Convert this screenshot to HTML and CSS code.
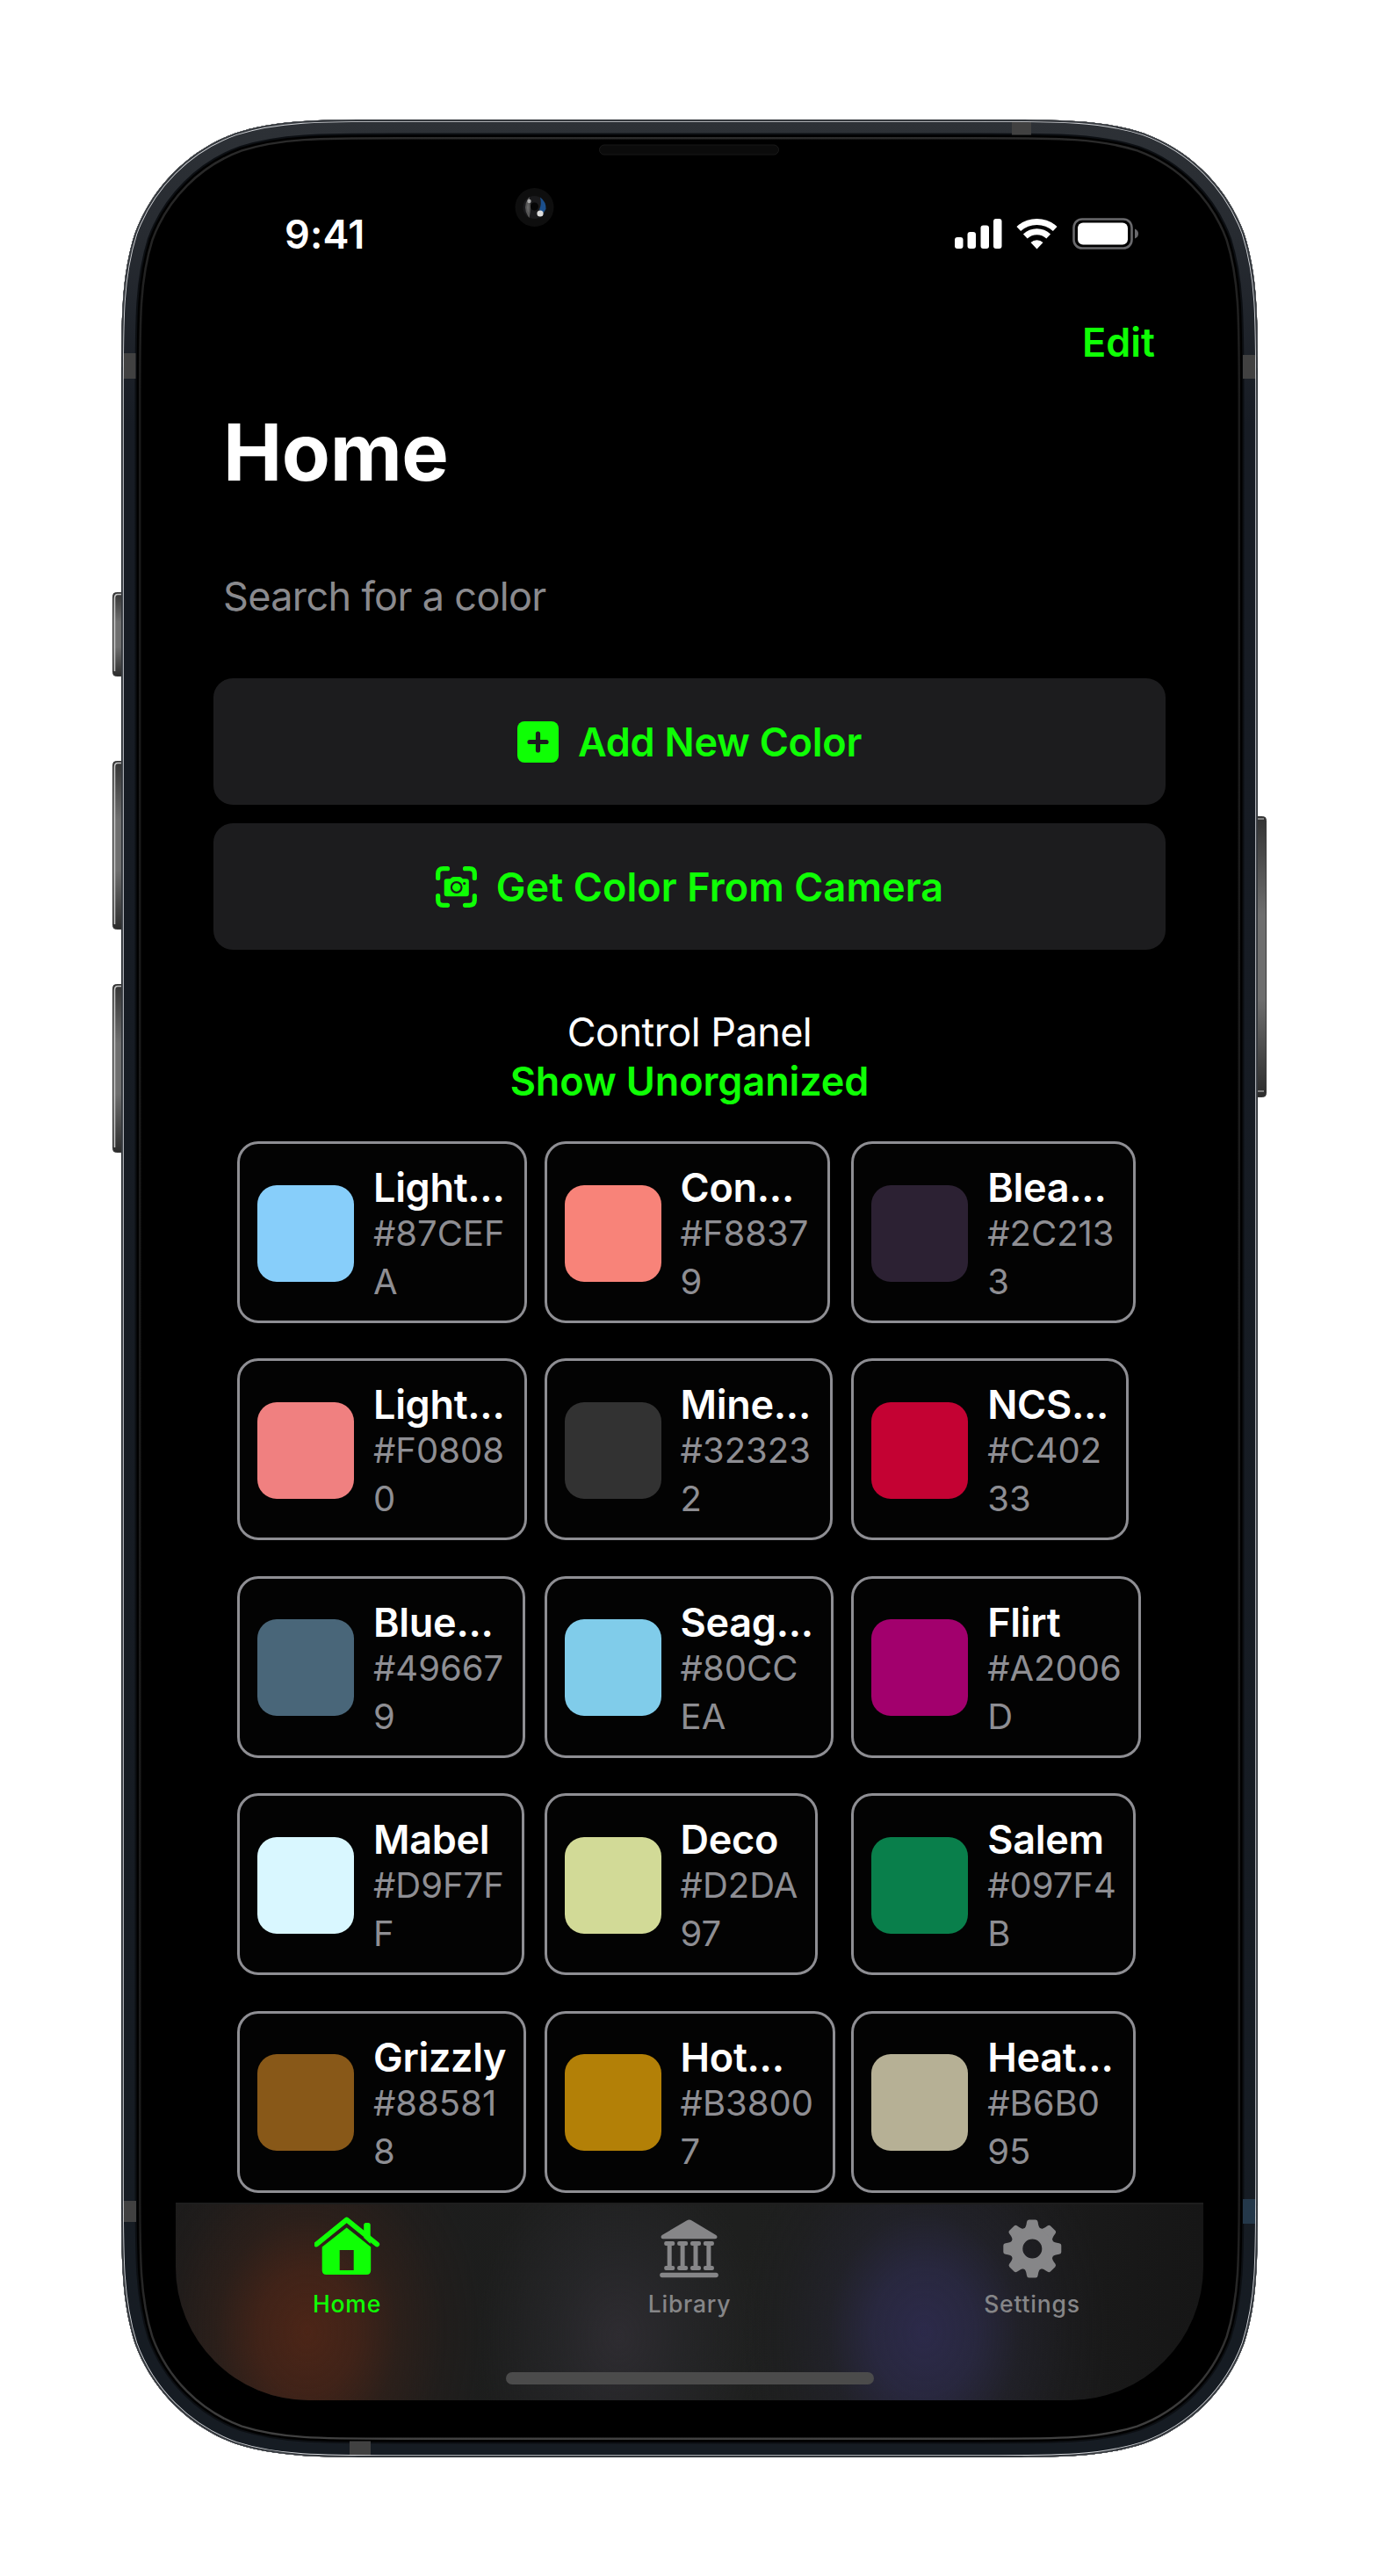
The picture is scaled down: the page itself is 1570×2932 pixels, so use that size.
FILE: index.html
```html
<!DOCTYPE html>
<html lang="en">
<head>
<meta charset="utf-8">
<title>Home</title>
<link rel="stylesheet" href="styles.css">
</head>
<body>
<div class="device">
  <svg class="frame" viewBox="-12 0 1318 2661" aria-hidden="true">
    <defs>
      <path id="outline" d="M314.9 0H979.1C1069.8 0 1115.1 0 1163.9 15.4C1217.2 34.8 1259.2 76.8 1278.6 130.1C1294 178.9 1294 224.2 1294 314.9V2346.1C1294 2436.8 1294 2482.1 1278.6 2530.9C1259.2 2584.2 1217.2 2626.2 1163.9 2645.6C1115.1 2661 1069.8 2661 979.1 2661H314.9C224.2 2661 178.9 2661 130.1 2645.6C76.8 2626.2 34.8 2584.2 15.4 2530.9C0 2482.1 0 2436.8 0 2346.1V314.9C0 224.2 0 178.9 15.4 130.1C34.8 76.8 76.8 34.8 130.1 15.4C178.9 0 224.2 0 314.9 0Z"/>
      <clipPath id="body"><use href="#outline"/></clipPath>
      <linearGradient id="metal" gradientUnits="userSpaceOnUse" x1="0" y1="0" x2="0" y2="2661">
        <stop offset="0" stop-color="#2d3136"/><stop offset=".05" stop-color="#272b31"/><stop offset=".13" stop-color="#171c24"/><stop offset="1" stop-color="#161c23"/>
      </linearGradient>
      <linearGradient id="lip" gradientUnits="userSpaceOnUse" x1="0" y1="0" x2="0" y2="2661">
        <stop offset="0" stop-color="#2c2c2c"/><stop offset=".12" stop-color="#1a1a1a"/><stop offset=".9" stop-color="#1c1c1c"/><stop offset="1" stop-color="#444"/>
      </linearGradient>
      <linearGradient id="key" x1="0" y1="0" x2="0" y2="1">
        <stop offset="0" stop-color="#333"/><stop offset=".35" stop-color="#6e6e6e"/><stop offset=".65" stop-color="#6e6e6e"/><stop offset="1" stop-color="#2c2c2c"/>
      </linearGradient>
    </defs>
    <g fill="url(#key)" stroke="#3a3a3a" stroke-width="1">
      <rect x="-9.5" y="538.5" width="16" height="95" rx="4"/>
      <rect x="-9.5" y="730.5" width="16" height="191" rx="4"/>
      <rect x="-9.5" y="984.5" width="16" height="191" rx="4"/>
      <rect x="1287" y="793.5" width="16.500" height="319" rx="4"/>
    </g>
    <g fill="none" stroke="#c4c4c4" stroke-width="1.6">
      <path d="M0 540.500H-4Q-7.500 540.500-7.500 545V628M0 732.500H-4Q-7.500 732.500-7.500 737V916M0 986.500H-4Q-7.500 986.500-7.500 991V1170"/>
      <path d="M1294 796H1301M1294 1106H1301" stroke="#9a9a9a"/>
    </g>
    <g clip-path="url(#body)" fill="none">
      <use href="#outline" fill="#000" stroke="url(#lip)" stroke-width="45"/>
      <use href="#outline" stroke="#000" stroke-width="40"/>
      <use href="#outline" stroke="#0c0f13" stroke-width="35"/>
      <use href="#outline" stroke="url(#metal)" stroke-width="31"/>
      <g fill="#414141">
        <rect x="2" y="266" width="14.500" height="29"/>
        <rect x="1277" y="268" width="16" height="27"/>
        <rect x="1014" y="2" width="22" height="15.500"/>
        <rect x="2" y="2369" width="15" height="24"/>
        <rect x="260" y="2642.500" width="24" height="17"/>
        <rect x="1277" y="2367" width="15" height="28" fill="#24384a"/>
      </g>
      <use href="#outline" stroke="#d4d6da" stroke-width="5.600"/>
      <use href="#outline" stroke="#34383d" stroke-width="3.800"/>
    </g>
    <rect x="544.500" y="29" width="204" height="11" rx="5.500" fill="#0b0b0b" stroke="#191919"/>
    <circle cx="470.500" cy="100" r="22" fill="#0e0e0e"/>
    <circle cx="470.500" cy="100" r="13" fill="#1a1a1c"/>
    <path d="M464 90.500Q458 100 464 109.500Q466 100 464 90.500Z" fill="#6a6a6a" stroke="#555" stroke-width="2"/>
    <path d="M477 88.500Q484 94 483.500 102L480 107L476 103Q479 96 477 88.500Z" fill="#1b4f8c"/>
    <circle cx="470.500" cy="99" r="4.500" fill="#050505"/>
    <circle cx="464.500" cy="93" r="2.200" fill="#aaa"/>
    <circle cx="477" cy="107" r="3.600" fill="#ddd"/>
  </svg>

  <main class="screen">
    <header class="status">
      <span class="time">9:41</span>
      <svg class="indicators" width="210" height="36" viewBox="0 0 210 36" aria-hidden="true">
        <g fill="#fff">
          <rect x="1" y="22" width="9.500" height="13" rx="3"/>
          <rect x="15.500" y="16" width="9.500" height="19" rx="3"/>
          <rect x="30.500" y="8.500" width="9.500" height="26.500" rx="3"/>
          <rect x="45" y="1" width="9.500" height="34" rx="3"/>
        </g>
        <g fill="none" stroke="#fff" stroke-width="7">
          <path d="M73.800 12.500A31 31 0 0 1 115.200 12.500"/>
          <path d="M81.300 21A19.500 19.500 0 0 1 107.700 21"/>
        </g>
        <path d="M94.500 35.500L87.500 28A10 10 0 0 1 101.500 28Z" fill="#fff"/>
        <rect x="136.500" y="1.500" width="66" height="33" rx="9.500" fill="none" stroke="#69696c" stroke-width="2.600"/>
        <rect x="141" y="5.500" width="57" height="25" rx="6" fill="#fff"/>
        <path d="M206 12.500Q210 14 210 18T206 23.500Z" fill="#69696c"/>
      </svg>
    </header>
    <nav class="nav"><a class="edit">Edit</a></nav>
    <h1 class="title">Home</h1>
    <div class="search">Search for a color</div>

    <div class="actions">
      <button class="action">
        <svg width="47" height="47" viewBox="0 0 47 47" aria-hidden="true">
          <rect width="47" height="47" rx="8" fill="currentColor"/>
          <path d="M23.500 14V33M14 23.500H33" stroke="#1c1c1e" stroke-width="5.200" stroke-linecap="round"/>
        </svg>
        <span class="add-label">Add New Color</span>
      </button>
      <button class="action">
        <svg width="47" height="47" viewBox="0 0 47 47" aria-hidden="true">
          <path d="M2.700 13.500V8.500Q2.700 2.700 8.500 2.700H13.500M33.500 2.700H38.500Q44.300 2.700 44.300 8.500V13.500M44.300 33.500V38.500Q44.300 44.300 38.500 44.300H33.500M13.500 44.300H8.500Q2.700 44.300 2.700 38.500V33.500" fill="none" stroke="currentColor" stroke-width="5.200" stroke-linecap="round"/>
          <path d="M12.500 14.300H16.500L18 13Q19 12 20.500 12H27Q28.500 12 29.500 13L31 14.300H35Q37.800 14.300 37.800 17V31.500Q37.800 34.300 35 34.300H12.500Q9.700 34.300 9.700 31.500V17Q9.700 14.300 12.500 14.300Z" fill="currentColor"/>
          <circle cx="23.700" cy="24" r="5.800" fill="none" stroke="#1c1c1e" stroke-width="2.200"/>
          <circle cx="32.700" cy="19.500" r="1.600" fill="#1c1c1e"/>
        </svg>
        <span class="camera-label">Get Color From Camera</span>
      </button>
    </div>

    <section class="heading">
      <div class="panel">Control Panel</div>
      <div class="unorganized">Show Unorganized</div>
    </section>

    <section class="colors">
      <article class="card" style="width:330px"><i class="swatch" style="background:#87CEFA"></i><div class="info"><b>Light...</b><span>#87CEF<br>A</span></div></article>
      <article class="card" style="width:325px"><i class="swatch" style="background:#F88379"></i><div class="info"><b>Con...</b><span>#F8837<br>9</span></div></article>
      <article class="card" style="width:324px"><i class="swatch" style="background:#2C2133"></i><div class="info"><b>Blea...</b><span>#2C213<br>3</span></div></article>

      <article class="card" style="width:330px"><i class="swatch" style="background:#F08080"></i><div class="info"><b>Light...</b><span>#F0808<br>0</span></div></article>
      <article class="card" style="width:328px"><i class="swatch" style="background:#323232"></i><div class="info"><b>Mine...</b><span>#32323<br>2</span></div></article>
      <article class="card" style="width:316px"><i class="swatch" style="background:#C40233"></i><div class="info"><b>NCS...</b><span>#C402<br>33</span></div></article>

      <article class="card" style="width:328px"><i class="swatch" style="background:#496679"></i><div class="info"><b>Blue...</b><span>#49667<br>9</span></div></article>
      <article class="card" style="width:329px"><i class="swatch" style="background:#80CCEA"></i><div class="info"><b>Seag...</b><span>#80CC<br>EA</span></div></article>
      <article class="card" style="width:330px"><i class="swatch" style="background:#A2006D"></i><div class="info"><b>Flirt</b><span>#A2006<br>D</span></div></article>

      <article class="card" style="width:327px"><i class="swatch" style="background:#D9F7FF"></i><div class="info"><b>Mabel</b><span>#D9F7F<br>F</span></div></article>
      <article class="card" style="width:311px"><i class="swatch" style="background:#D2DA97"></i><div class="info"><b>Deco</b><span>#D2DA<br>97</span></div></article>
      <article class="card" style="width:324px"><i class="swatch" style="background:#097F4B"></i><div class="info"><b>Salem</b><span>#097F4<br>B</span></div></article>

      <article class="card" style="width:329px"><i class="swatch" style="background:#885818"></i><div class="info"><b>Grizzly</b><span>#88581<br>8</span></div></article>
      <article class="card" style="width:331px"><i class="swatch" style="background:#B38007"></i><div class="info"><b>Hot...</b><span>#B3800<br>7</span></div></article>
      <article class="card" style="width:324px"><i class="swatch" style="background:#B6B095"></i><div class="info"><b>Heat...</b><span>#B6B0<br>95</span></div></article>
    </section>

    <footer class="tabbar">
      <div class="tabs">
        <a class="tab active">
          <svg width="75" height="70" viewBox="0.8 0 75 70" aria-hidden="true">
            <path d="M57 24V9.500Q57 7 59.500 7H62Q64.500 7 64.500 9.500V31Z" fill="currentColor"/>
            <path d="M3 31.500L37.500 3.500L72 31.500" fill="none" stroke="currentColor" stroke-width="5.800" stroke-linecap="round" stroke-linejoin="round"/>
            <path fill-rule="evenodd" d="M37.500 12.500L65 34.500V61Q65 66 60 66H14.500Q9.500 66 9.500 61V34.500ZM29.500 38V61H45.500V38Z" fill="currentColor"/>
          </svg>
          <span>Home</span>
        </a>
        <a class="tab">
          <svg width="75" height="70" viewBox="-3.200 -3.500 75 70" fill="currentColor" aria-hidden="true">
            <path d="M2.500 17.500L30.500 1Q33.500-1 36.500 1L64 17.500Q65.500 18.500 65.300 20Q65 21.700 63 21.700H3.500Q1.500 21.700 1.400 20Q1.200 18.500 2.500 17.500Z"/>
            <g id="pillar"><rect x="5" y="24.400" width="12" height="5" rx="2"/><rect x="8.500" y="26" width="5" height="29"/><rect x="5" y="52.400" width="12" height="5" rx="2"/></g>
            <use href="#pillar" x="14.900"/><use href="#pillar" x="29.800"/><use href="#pillar" x="44.700"/>
            <rect y="60.300" width="66.600" height="5.500" rx="2.700"/>
          </svg>
          <span>Library</span>
        </a>
        <a class="tab">
          <svg width="75" height="70" viewBox="-37.300 -36.500 75 70" fill="currentColor" aria-hidden="true">
            <circle r="18" fill="none" stroke="currentColor" stroke-width="14"/>
            <g id="pair"><path id="tooth" d="M-9-23Q-7-25-6.300-30.500Q-6-33-3.800-33H3.800Q6-33 6.300-30.500Q7-25 9-23Z"/><use href="#tooth" transform="rotate(180)"/></g>
            <use href="#pair" transform="rotate(45)"/><use href="#pair" transform="rotate(90)"/><use href="#pair" transform="rotate(135)"/>
          </svg>
          <span>Settings</span>
        </a>
      </div>
      <div class="grabber"></div>
    </footer>
  </main>
</div>
</body>
</html>
```

FILE: styles.css
```css
* { box-sizing: border-box; }
body { margin: 0; background: #fff; font-family: Inter, "Liberation Sans", sans-serif; }

.device { position: relative; width: 1294px; height: 2661px; margin: 136px auto 135px; padding: 62px 62px 0; }
.frame { position: absolute; left: -12px; top: 0; width: 1318px; height: 2661px; }

.screen { position: relative; display: flex; flex-direction: column; width: 1170px; height: 2534px; overflow: hidden; border-radius: 0 0 152px 152px; color: #fff; font-size: 45px; }

.status { display: flex; flex: none; justify-content: space-between; align-items: center; height: 136px; padding: 0 74px 0 124px; }
.time { font-weight: 600; letter-spacing: .2px; }
.indicators { display: block; }

.nav { display: flex; flex: none; justify-content: flex-end; align-items: center; height: 110px; padding-right: 55px; }
.edit, .action, .unorganized { color: #0fff05; font-weight: 600; }
.title { flex: none; margin: 0; height: 141px; padding-left: 54px; line-height: 141px; font-size: 90px; font-weight: 700; letter-spacing: -.4px; }
.search { flex: none; height: 187px; padding-left: 54px; line-height: 187px; color: #8a8a8e; letter-spacing: -.65px; }

.actions { display: flex; flex: none; flex-direction: column; gap: 21px; padding: 0 43px; }
.action { display: flex; justify-content: center; align-items: center; gap: 22px; height: 144px; padding: 1px 0 0; border: 0; border-radius: 22px; background: #1c1c1e; font-family: inherit; font-size: 45px; }
.add-label { letter-spacing: -.25px; }
.camera-label { letter-spacing: .1px; }

.heading { flex: none; padding: 66px 0 42px; text-align: center; line-height: 55px; }
.panel { letter-spacing: -.55px; }
.unorganized { letter-spacing: -.1px; padding-top: 1px; height: 55px; }

.colors { display: grid; flex: none; grid-template-columns: repeat(3, 349.600px); grid-auto-rows: 207px; row-gap: 40.400px; padding-left: 70px; }
.card { display: flex; gap: 22px; padding: 0 0 0 20px; border: 3px solid #8e8e93; border-radius: 24px; background: #030303; }
.swatch { flex: none; width: 110px; height: 110px; margin-top: 46.500px; border-radius: 22px; }
.info { display: flex; flex-direction: column; margin-top: 26px; white-space: nowrap; }
.info b { font-weight: 600; line-height: 48px; letter-spacing: -.3px; }
.info span { color: #8e8e93; font-size: 40px; line-height: 55px; }

.tabbar { display: flex; flex: 1; flex-direction: column; align-items: center; justify-content: space-between; margin-top: 11px; padding: 14px 0 18px; border-top: 2px solid #1e1e1e;
  background:
    radial-gradient(ellipse 200px 250px at 150px 145px, #4c2517 0, rgba(76, 37, 23, .75) 28%, rgba(66, 36, 24, .4) 52%, rgba(60, 34, 24, .13) 78%, transparent 100%),
    radial-gradient(ellipse 160px 210px at 505px 150px, #2e2c31 0, rgba(42, 42, 46, .6) 45%, transparent 100%),
    radial-gradient(ellipse 210px 260px at 852px 145px, #2c2a4a 0, rgba(43, 42, 71, .8) 28%, rgba(38, 38, 54, .45) 52%, rgba(36, 36, 48, .15) 78%, transparent 100%),
    linear-gradient(90deg, #1b1b1b, #1e1f1e 55%, #1c1c1c 80%, #161616); }
.tabs { display: grid; grid-template-columns: repeat(3, 390px); width: 1170px; }
.tab { display: flex; flex-direction: column; align-items: center; gap: 13px; color: #868688; font-size: 26.500px; font-weight: 500; line-height: 32px; letter-spacing: .8px; }
.tab svg { display: block; }
.active { color: #0fff05; }
.grabber { width: 419px; height: 14px; border-radius: 7px; background: #4b4b4b; }
```
